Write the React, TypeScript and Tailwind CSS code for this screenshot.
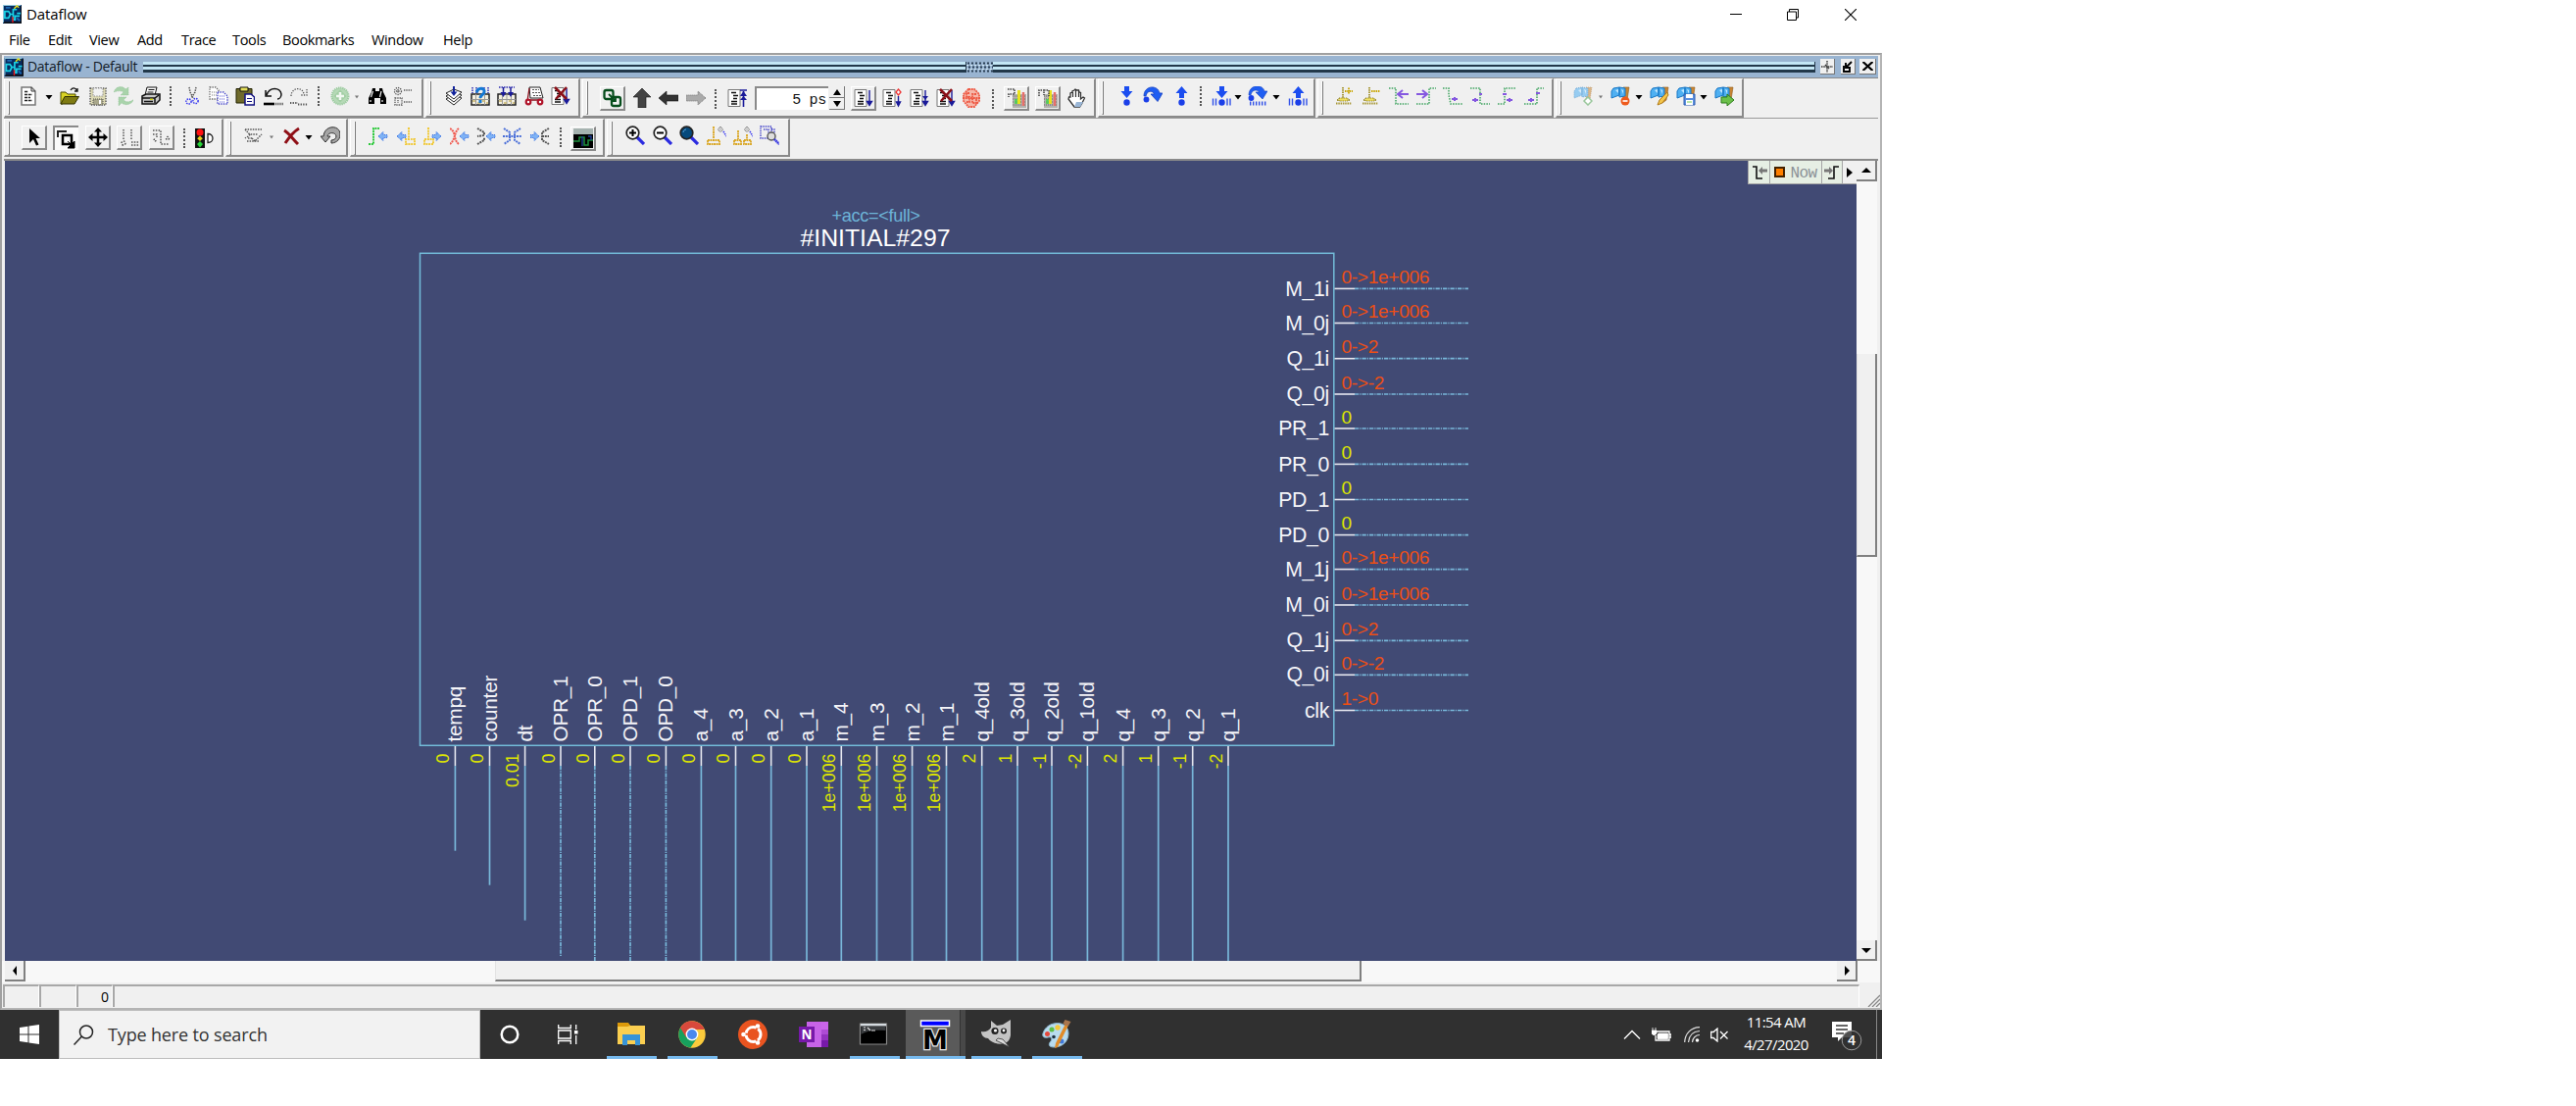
import type { ReactNode } from "react";

const UI = "font-['Open_Sans','Noto_Sans',sans-serif]";

/* ---------- small building blocks ---------- */

function Icon({ gap = "", children }: { gap?: string; children: ReactNode }) {
  return (
    <svg className={`h-5 w-5 shrink-0 ${gap}`} viewBox="0 0 20 20" fill="none">
      {children}
    </svg>
  );
}

function Caret({ gap, dim = false }: { gap: string; dim?: boolean }) {
  return (
    <svg className={`h-5 w-2 shrink-0 ${gap}`} viewBox="0 0 8 20">
      {dim ? <path d="M2 9.5h4L4 12.5z" fill="#777" /> : <path d="M.5 9h7L4 13.5z" fill="#000" />}
    </svg>
  );
}

function Sep({ gap }: { gap: string }) {
  return <div className={`h-5 w-0.5 shrink-0 border-l-2 border-dotted border-[#555] ${gap}`} />;
}

function Btn({ gap, pressed = false, children }: { gap: string; pressed?: boolean; children: ReactNode }) {
  return (
    <div
      className={`flex h-[25px] w-[26px] shrink-0 items-center justify-center ${gap} ${
        pressed
          ? "border-t-2 border-l-2 border-[#8a8a8a] bg-[#fafafa]"
          : "border-t border-l border-t-white border-l-white border-r-2 border-b-2 border-r-[#8a8a8a] border-b-[#8a8a8a] bg-[#f0f0f0]"
      }`}
    >
      {children}
    </div>
  );
}

function Group({ size, top, children }: { size: string; top: string; children: ReactNode }) {
  return (
    <div
      className={`flex shrink-0 items-start border-t border-l border-t-white border-l-white border-r-2 border-b-2 border-r-[#8a8a8a] border-b-[#8a8a8a] ${size}`}
    >
      <div className="mt-0.5 ml-[3px] h-[34px] w-0.5 shrink-0 border-r border-b border-l border-l-white border-r-[#777] border-b-[#777]" />
      <div className={`flex items-start ${top}`}>{children}</div>
    </div>
  );
}

/* ---------- icon drawings ---------- */

const Lines = () => (
  <>
    <path d="M2 1h10l4 4v14H2z" fill="#fff" stroke="#777" strokeWidth="1.5" />
    <path d="M12 1v4h4" stroke="#333" />
    <path d="M5 5.5h4M5 8.5h8M5 11.5h6M5 14.5h8" stroke="#222" strokeWidth="1.5" strokeDasharray="3 .8" />
  </>
);
const RunDoc = () => (
  <>
    <path d="M1 1.500h12v17H1z" fill="#fff" stroke="#777" />
    <path d="M4 4.500h5M6 7.500h5M6 10.500h4M4 13.500h6M4 16h6" stroke="#111" strokeWidth="1.700" />
  </>
);
const NavyDown = ({ x = 16 }: { x?: number }) => (
  <path d={`M${x} 2v14M${x - 2.500} 13.500l2.500 4l2.500-4z`} stroke="#1a1a99" strokeWidth="1.400" fill="#1a1a99" />
);
const AppIcon = () => (
  <>
    <path d="M0 0h20v20H0z" fill="#072a5e" />
    <path d="M0 0h19v1H1v18H0z" fill="#8fc7dd" />
    <path d="M1 19h19V1" stroke="#111" strokeWidth="1.600" />
    <path d="M2 7h4l2 3-2 4H2zM8 10h3V5h4M11 9v7h2v-4h5M15 9h4" stroke="#19d3e6" strokeWidth="1.800" />
    <path d="M10.500 13v6" stroke="#e11" strokeWidth="1.500" />
    <path d="M12 4l3-3 2 2" stroke="#e8e01d" strokeWidth="1.500" />
    <path d="M3 3h5M15 14l3 3" stroke="#1c6ab4" strokeWidth="2" />
  </>
);
const Folder = () => (
  <>
    <path d="M1 6h5l2 2h8v4H7l-4 6H1z" fill="#d9d324" stroke="#4a4a00" />
    <path d="M5 10.500h14.500L15 18H1z" fill="#7f7b12" stroke="#333300" />
    <path d="M11 4c2-3 5-3 7 1m0-3v3h-3" stroke="#111" strokeWidth="1.300" />
  </>
);
const Save = () => (
  <>
    <path d="M2 2h16v17H2z" fill="#dcd9b4" stroke="#555" strokeWidth="1.400" strokeDasharray="1.300 1.300" />
    <path d="M5 2h10v8H5z" fill="#f3f3f3" stroke="#888" strokeDasharray="1.300 1.300" />
    <path d="M5 13h10v6H5z" fill="#a9a78b" stroke="#555" strokeDasharray="1 1" />
    <path d="M11 14h2v4h-2z" fill="#fff" />
  </>
);
const Refresh = () => (
  <g fill="#a9d3ab" stroke="#8fbf93" strokeWidth=".6" strokeDasharray="1 .7">
    <path d="M0 6c2-6 9-7 12-3l3-2v8H7l3-3C7 4 3 5 0 6z" />
    <path d="M21 13c-3 6-9 7-13 4l-3 3v-9h8l-3 3c3 3 7 2 11-1z" />
  </g>
);
const Print = () => (
  <>
    <path d="M6 1h10l-2 8H4z" fill="#fff" stroke="#111" />
    <path d="M7.500 3.500h6M6.500 6h6" stroke="#111" />
    <path d="M1 10l4-2h14v6l-4 4H1z" fill="#c9c9c9" stroke="#111" strokeWidth="1.500" />
    <path d="M1 12h13l4-3M3 15.500h9M14 12v5" stroke="#111" strokeWidth="1.500" />
    <path d="M9 13.300h3" stroke="#d6d61c" strokeWidth="1.500" />
  </>
);
const Cut = () => (
  <>
    <path d="M7 1l1 5 3 6M14 1l-1 5-4 6" stroke="#555" strokeWidth="1.500" strokeDasharray="1.500 1" />
    <g stroke="#3a3af0" strokeWidth="1.500" strokeDasharray="1.500 1">
      <circle cx="6.500" cy="15.500" r="2.600" />
      <circle cx="13.500" cy="15" r="2.600" />
    </g>
  </>
);
const Copy = () => (
  <>
    <path d="M1 1h6l3 3v9H1z" fill="#fff" stroke="#666" strokeDasharray="1.300 1.200" strokeWidth="1.300" />
    <path d="M3 6h5M3 9h5" stroke="#777" strokeDasharray="1 1" />
    <path d="M9 6h6l4 4v8H9z" fill="#fff" stroke="#4040c8" strokeDasharray="1.300 1.200" strokeWidth="1.300" />
    <path d="M11 10h6M11 13h6M11 16h6" stroke="#4d4dd0" strokeDasharray="1 1" />
  </>
);
const Paste = () => (
  <>
    <path d="M1 2.500h16V17H1z" fill="#6f6a2c" stroke="#222200" />
    <path d="M5 1h8v4H5z" fill="#e4df5a" stroke="#111" />
    <path d="M10 8h6l3.500 3v8H10z" fill="#fff" stroke="#101080" strokeWidth="1.500" />
    <path d="M12 12.500h5M12 15.500h5" stroke="#101080" strokeWidth="1.200" />
  </>
);
const Undo = ({ dim = false }: { dim?: boolean }) =>
  dim ? (
    <g stroke="#555" strokeWidth="1.300" strokeDasharray="1.300 1.300">
      <path d="M2 10C2 1 14 0 15 8M18 3v6h-6" />
      <path d="M1 17h8M9 18.500h10" strokeWidth="1.800" />
    </g>
  ) : (
    <>
      <path d="M2 4v6h6M3 9C6 0 17 1 18 8c0 3-2 5-4 5" stroke="#111" strokeWidth="1.500" />
      <path d="M0 18h11" stroke="#000" strokeWidth="2.600" />
      <path d="M12 18h8" stroke="#555" strokeWidth="2.600" strokeDasharray="1.200 1" />
    </>
  );
const AddGreen = () => (
  <>
    <circle cx="10" cy="10" r="8.500" fill="#b5d9b6" stroke="#9ccba0" strokeWidth="2" strokeDasharray="1.300 .8" />
    <path d="M10 3.500l6.500 6.500-6.500 6.500L3.500 10z" fill="#a2cea4" />
    <path d="M10 6v8M6 10h8" stroke="#f1f8f1" strokeWidth="2.500" />
  </>
);
const Binoculars = () => (
  <>
    <path d="M5 2h3v3h4V2h3l1 4 3 6v6h-6v-6H7v6H1v-6l3-6z" fill="#000" />
    <path d="M5.500 5l-2 6M14 5l-1.500 6M3 14v2M15 14v2" stroke="#eee" strokeWidth="1.200" />
  </>
);
const FindBoxes = () => (
  <g stroke="#555" strokeWidth="1.300" strokeDasharray="1.300 1">
    <circle cx="5" cy="5" r="3.500" />
    <path d="M2 12h7v7H2zM11 4h8M11 16h8M5 3v4M3 5h4M5 14v3" />
  </g>
);
const Stack = () => (
  <>
    <path d="M2 13l8-5 8 4-8 7z" fill="#fff" stroke="#222" />
    <path d="M2 10l8-5 8 4-8 7z" fill="#fff" stroke="#222" />
    <path d="M2 7l8-4 8 3-8 7z" fill="#fff" stroke="#222" />
    <path d="M10 0v6" stroke="#11229b" strokeWidth="2" />
    <path d="M6.500 5.500h7L10 10z" fill="#11229b" />
  </>
);
const Grid = () => (
  <>
    <path d="M1 8h18v11H1z" fill="#f3efe0" stroke="#222" strokeWidth="1.500" />
    <path d="M1 13.500h18M5.500 8v11M10 8v11M14.500 8v11" stroke="#999" />
    <path d="M2 15h3M7 17h3M12 15h3M16 17h2" stroke="#c8b56b" strokeWidth="1.500" />
  </>
);
const GridHelp = () => (
  <>
    <path d="M2 1v6M6 1v6M14 1v6M18 1v6" stroke="#2a2ab0" strokeWidth="1.500" strokeDasharray="1.500 1" />
    <Grid />
    <path d="M6.500 6.500C7 1 15 1 14 6c-.5 2.500-4 3-4 6M10 14v3" stroke="#1478d4" strokeWidth="3" />
  </>
);
const GridDown = () => (
  <>
    <path d="M2 1h16" stroke="#2a2ab0" strokeWidth="1.500" strokeDasharray="1.500 1" />
    <Grid />
    <path d="M6.500 1v6M14 1v6" stroke="#1a1a99" strokeWidth="1.500" />
    <path d="M3.500 6h6l-3 5zM11 6h6l-3 5z" fill="#1a1a99" />
  </>
);
const Bike = () => (
  <>
    <path d="M5 1h11l3 11H6z" fill="#fff" stroke="#222" />
    <path d="M8 3.500h7M8 6.500h8M9 9.500h8" stroke="#555" strokeDasharray="2 1" />
    <path d="M5 2L3 15M5 14h11" stroke="#8b0f1c" strokeWidth="1.300" />
    <circle cx="4" cy="16" r="2.300" fill="#fff" stroke="#b0142a" strokeWidth="2.200" />
    <circle cx="16" cy="16" r="2.300" fill="#fff" stroke="#b0142a" strokeWidth="2.200" />
  </>
);
const DocKill = () => (
  <>
    <RunDoc />
    <NavyDown />
    <path d="M4 1l12 12M16 1L5 13" stroke="#8b1018" strokeWidth="2.500" />
  </>
);
const GreenLink = () => (
  <g stroke="#064d1c" strokeWidth="2.300">
    <rect x="1.500" y="2" width="9" height="9" rx="2" />
    <rect x="9" y="9" width="9" height="9" rx="2" />
    <path d="M6 6l7 7M13 9v4H9" strokeWidth="1.800" />
  </g>
);
const Restart = () => (
  <>
    <RunDoc />
    <path d="M13 2h7M16.500 3v16" stroke="#1a1a99" strokeWidth="1.600" />
    <path d="M13 8l3.500-5L20 8zM13 12l3.500-4 3.500 4z" fill="#1a1a99" />
  </>
);
const RunOne = () => (<><RunDoc /><NavyDown /></>);
const RunCont = () => (
  <>
    <RunDoc />
    <path d="M16.500 1l2.500 3-2.500 3L14 4z" fill="#fff" stroke="#e33" strokeWidth="1.300" />
    <path d="M16.500 8v8M14.500 14l2 4 2-4z" stroke="#1a1a99" strokeWidth="1.400" fill="#1a1a99" />
  </>
);
const RunAll = () => (
  <>
    <RunDoc />
    <NavyDown />
    <path d="M13 8h6l-3 4z" fill="#1a1a99" />
  </>
);
const StopSign = () => (
  <g stroke="#ee5a45" strokeWidth="1.800" strokeDasharray="2 .7">
    <path d="M7 1h6l5 5v7l-5 6H7l-5-6V6z" fill="#f6b7aa" />
    <path d="M8 5H5v4h3v5H5M15 6h-4v9h4v-5M1 10h18" />
  </g>
);
const Profile = ({ left = true }: { left?: boolean }) => (
  <>
    <path d="M6 6h14v14H6z" fill="#b3b3ae" />
    <path d="M6 8h14M6 11h14M6 14h14M6 17h14" stroke="#666" strokeDasharray="1 1" />
    <path d="M12.500 2v14" stroke="#e8e21d" strokeWidth="3" />
    <path d="M17 4v14" stroke="#e8706a" strokeWidth="2.500" />
    <path d="M9.500 11v5" stroke="#51d05a" strokeWidth="2.500" />
    <path d={left ? "M1 1h7v5H2v3" : "M1 8V2h5v5M6 2h5v6"} stroke="#444" strokeWidth="1.600" strokeDasharray="1.500 1" />
  </>
);
const Hand = () => (
  <>
    <path d="M4 9V5l2-1V3l2-1 1-1 1.500 1 2 0 .5 2 1.500.5V11l2.500-2 1.500 1-3 6-2 3H8L2 11l.5-2z" fill="#fff" stroke="#333" strokeWidth="1.300" />
    <path d="M6.500 4v5M9.500 2v7M12.500 3v6" stroke="#333" strokeWidth="1.200" />
    <path d="M10 14h7l-3 5H8z" fill="#9ab6d6" />
  </>
);
const StepIn = () => (
  <>
    <path d="M8 0h5v5h3.500L10.500 12 4.500 5H8z" fill="#1b4df0" />
    <circle cx="10.500" cy="16.500" r="3.200" fill="#1b3fe8" />
  </>
);
const StepOut = () => (
  <>
    <path d="M8 12h5V7h3.500L10.500 0 4.500 7H8z" fill="#1b4df0" />
    <circle cx="10.500" cy="16.500" r="3.200" fill="#1b3fe8" />
  </>
);
const StepOver = () => (
  <>
    <path d="M1 10C1-1 15-2 17 7h3L15 15.500 8 8h3.500C10 4 4 4 3 10z" fill="#1f5ef2" stroke="#1640c0" strokeWidth=".8" />
    <circle cx="3.500" cy="13.500" r="2.900" fill="#1b3fe8" />
  </>
);
const Bars = () => <path d="M1.500 12.500v7M4.500 12.500v7M16 12.500v7M19 12.500v7" stroke="#3050e8" strokeWidth="1.400" />;
const OverBars = () => (
  <>
    <path d="M1 9C1-2 15-3 17 5h3L15 13 8 6h3.500C10 3 4 3 3 9z" fill="#1f5ef2" stroke="#1640c0" strokeWidth=".6" />
    <circle cx="3.500" cy="12" r="2.900" fill="#1b3fe8" />
    <path d="M2 17.500h18" stroke="#3050e8" strokeWidth="4" strokeDasharray="1.400 1.600" />
  </>
);
const Cursor = ({ plus = false }: { plus?: boolean }) => (
  <>
    <path d="M8 1v11M2 14h13M1 17.500h16" stroke="#a8983a" strokeWidth="2" strokeDasharray="1.500 .8" />
    <path d="M4 12h9v3H4z" fill="#f0e060" stroke="#8f8226" strokeDasharray="1.300 1" />
    <path d={plus ? "M10 5h8M14 1.500v7" : "M10 5h9"} stroke="#c9a500" strokeWidth="1.800" strokeDasharray="1.500 .8" />
  </>
);
const Edge = ({ d, a, flip = false }: { d: string; a: string; flip?: boolean }) => (
  <>
    <path d={d} stroke="#3ea35f" strokeWidth="1.500" strokeDasharray="1.500 1.200" />
    <g transform={flip ? "matrix(-1 0 0 1 20 0)" : undefined}>
      <path d={a} stroke="#8558e0" strokeWidth="2" />
    </g>
  </>
);
const Bookmark = ({ dim = false, children }: { dim?: boolean; children?: ReactNode }) => (
  <>
    <g strokeDasharray={dim ? "1 1" : undefined} opacity={dim ? 0.55 : 1}>
      <path d="M13 1h6l-2 13-4 3z" fill="#c98532" stroke="#8d5a1c" strokeWidth=".6" />
      <path d="M3 2l6-1v8L1 12V5zM9 1l6 1v8l-6 1z" fill="#4fb0f2" stroke="#1977c4" />
      <path d="M5 4l3-1v4zM11 3l2 1v4z" fill="#c2e6fd" />
    </g>
    {children}
  </>
);
const Arrow = () => <path d="M5 1v15l4-4 3 6.500 2.500-1L11.500 11H16z" fill="#000" />;
const SelectBox = () => (
  <>
    <path d="M1 8V2h9" stroke="#222" strokeWidth="2" />
    <path d="M6 6h9v9H6z" stroke="#000" strokeWidth="2.500" />
    <path d="M11 12l6 6M18 12v7h-7z" stroke="#000" fill="#000" />
  </>
);
const Move = () => (
  <>
    <path d="M10 2v16M2 10h16" stroke="#000" strokeWidth="2.500" />
    <path d="M10 0l4 4.500H6zM10 20l4-4.500H6zM0 10l4.500-4v8zM20 10l-4.500-4v8z" fill="#000" />
  </>
);
const DotsA = () => (
  <g stroke="#555" strokeWidth="1.500" strokeDasharray="1.500 1.300">
    <path d="M4 2v11M12 2v11M12 15h8M12 18h8" />
    <circle cx="4" cy="16" r="2" />
  </g>
);
const DotsB = () => (
  <g stroke="#555" strokeWidth="1.500" strokeDasharray="1.500 1.300">
    <path d="M1 3h8v14h8M1 7h4v4" />
    <circle cx="16" cy="11" r="1.500" />
    <circle cx="3" cy="13" r="1" />
  </g>
);
const Traffic = () => (
  <>
    <path d="M1 0h10v20H1z" fill="#111" />
    <circle cx="6" cy="4" r="3.500" fill="#f11" />
    <path d="M6 7.500l2.800 2.800L6 13l-2.800-2.700z" fill="#e8d31c" />
    <path d="M6 13l3 3-3 3.500L3 16z" fill="#27d63a" />
    <path d="M14 5.500v9c3 0 5-2 5-4.500s-2-4.500-5-4.500z" fill="#fff" stroke="#222" strokeWidth="1.300" />
  </>
);
const DotGate = () => (
  <g stroke="#555" strokeWidth="1.500" strokeDasharray="1.500 1.100">
    <path d="M1 3h17M1 3c2 2 3 4 5 5h8M6 8c-2 3-4 3-5 4M3 15h13M8 12l3 3 7-7M4 12h4" />
  </g>
);
const RedX = () => <path d="M2 4c5 3 8 8 14 14M17 2C12 5 7 11 3 17" stroke="#8f0f16" strokeWidth="3" />;
const Loop = () => (
  <path d="M0 10h3C4-2 20-2 20 8c0 7-6 9-9 9v-3c3 0 5-2 5-4 0-4-8-5-9 0h3l-5 6z" fill="#a5a5a5" stroke="#333" />
);
const BlueArrow = ({ x, left = true }: { x: number; left?: boolean }) => (
  <path
    d={left ? `M${x} 10l5-4.500v3h4v3h-4v3z` : `M${x + 9} 10l-5-4.500v3h-4v3h4v3z`}
    fill="#7fb3f5"
    stroke="#3f77e6"
    strokeWidth="1"
    strokeDasharray="1.300 .8"
  />
);
const Net = ({ c, d, x, left = true }: { c: string; d: string; x?: number; left?: boolean }) => (
  <>
    <path d={d} stroke={c} strokeWidth="2" strokeDasharray="2 .8" />
    {x !== undefined && <BlueArrow x={x} left={left} />}
  </>
);
const Wave = () => (
  <>
    <path d="M0 0h20v20H0z" fill="#000" />
    <path d="M0 0h20v6H0z" fill="#a6b3b0" />
    <path d="M0 13h6V9h5v8h4v-5h5" stroke="#1d8f3c" strokeWidth="1.500" />
    <path d="M9 8v10M15 8h3v4" stroke="#21409a" strokeWidth="1.300" />
  </>
);
const Zoom = ({ kind }: { kind: "in" | "out" | "full" }) => (
  <>
    <path d="M12 12l7 7" stroke="#2b2be0" strokeWidth="3.200" />
    <circle cx="7.500" cy="7.500" r="6.300" fill={kind === "full" ? "#064a7c" : "#fff"} stroke="#222" strokeWidth="1.700" />
    {kind === "in" && <path d="M4 7.500h7M7.500 4v7" stroke="#000" strokeWidth="2" />}
    {kind === "out" && <path d="M4 7.500h7" stroke="#000" strokeWidth="2" />}
    {kind === "full" && <path d="M4 7c0-2 2-3 3-3" stroke="#5fa6d8" />}
  </>
);
const ZoomCursor = ({ two = false }: { two?: boolean }) => (
  <>
    <path d={two ? "M5 5v9M14 9v6M1 15h7v4H1zM11 15h7v4h-7z" : "M7 1v12M1 15h12v4H1z"} stroke="#d9a520" strokeWidth="1.800" strokeDasharray="1.900 .6" />
    <path d="M14 1l3 3-3 3-3-3z" stroke="#777" fill="#ccc" strokeDasharray="1 1" />
    <path d="M17 6l3 5" stroke="#3a3af0" strokeWidth="1.600" strokeDasharray="1.500 1" />
  </>
);
const ZoomArea = () => (
  <>
    <path d="M1 1h11v12H1zM4 4h5v4M12 4h3v4" stroke="#4040c8" strokeWidth="1.400" strokeDasharray="1.400 1" />
    <circle cx="12" cy="11" r="4" fill="#ddd" stroke="#555" strokeWidth="1.400" />
    <path d="M15 14l5 5" stroke="#2b2be0" strokeWidth="2.500" strokeDasharray="1.500 .6" />
  </>
);

/* ---------- window chrome ---------- */

function TitleBar() {
  return (
    <div className="flex h-[29px] items-center bg-white pl-[3px]">
      <svg className="h-[19px] w-[19px]" viewBox="0 0 20 20" fill="none"><AppIcon /></svg>
      <span className="flex-1 pb-px pl-[5px] text-[15px] tracking-[-0.1px] text-black">Dataflow</span>
      <svg className="h-3 w-3" viewBox="0 0 12 12"><path d="M0 5.500h12" stroke="#000" /></svg>
      <svg className="ml-[46px] h-3 w-3" viewBox="0 0 12 12" fill="none">
        <path d="M.5 3h9v8.500h-9zM2.500 3V.5h9V9H9.500" stroke="#000" />
      </svg>
      <svg className="mr-[26px] ml-[47px] h-3 w-3" viewBox="0 0 12 12"><path d="M0 0l12 12M12 0L0 12" stroke="#000" strokeWidth="1.100" /></svg>
    </div>
  );
}

function MenuBar() {
  const cls = "shrink-0 whitespace-nowrap";
  return (
    <div className="flex h-[25px] items-center bg-white pb-0.5 pl-[9px] text-[14.500px] tracking-[-0.35px] text-black">
      <span className={`${cls} w-10`}>File</span>
      <span className={`${cls} w-[42px]`}>Edit</span>
      <span className={`${cls} w-[49px]`}>View</span>
      <span className={`${cls} w-[45px]`}>Add</span>
      <span className={`${cls} w-[52px]`}>Trace</span>
      <span className={`${cls} w-[51px]`}>Tools</span>
      <span className={`${cls} w-[91px]`}>Bookmarks</span>
      <span className={`${cls} w-[73px]`}>Window</span>
      <span className={cls}>Help</span>
    </div>
  );
}

const HeaderRule = () => (
  <div className="h-[11px] flex-1 border-r border-[#24384a]">
    <div className="h-[3px] bg-[#c3e6f5]" />
    <div className="h-[2.500px] bg-[#22384a]" />
    <div className="h-[3px] bg-[#c3e6f5]" />
    <div className="h-[2.500px] bg-[#22384a]" />
  </div>
);

function PaneHeader() {
  const b = "flex h-4 shrink-0 items-center justify-center border-r border-b border-[#777] bg-[#f0f0f0]";
  return (
    <div className="flex h-[22px] items-center bg-[#99b4d1]">
      <svg className="h-[19px] w-5" viewBox="0 0 20 20" fill="none"><AppIcon /></svg>
      <span className="w-[122px] pb-0.5 pl-1 text-[14px] tracking-[-0.3px] whitespace-nowrap text-[#111a26]">Dataflow - Default</span>
      <HeaderRule />
      <svg className="h-[11px] w-[27px]" viewBox="0 0 27 11">
        <path d="M1 1.500h26M2 5.500h26M1 9.500h26" stroke="#2a3f55" strokeWidth="2" strokeDasharray="2 2" />
        <path d="M0 3.500h27M0 7.500h27" stroke="#d5ecf8" strokeDasharray="2 2" />
      </svg>
      <HeaderRule />
      <div className={`${b} ml-[5px] w-[15px]`}>
        <svg className="h-3 w-3" viewBox="0 0 12 12"><path d="M6 0v12M0 6h12M4 4l4 4" stroke="#333" strokeWidth="1.400" strokeDasharray="1.500 .8" /></svg>
      </div>
      <div className={`${b} ml-1.5 w-[15px]`}>
        <svg className="h-3 w-3" viewBox="0 0 12 12" fill="none"><path d="M2 5v6h6V8M10 1L5 6M4 2v5h5" stroke="#000" strokeWidth="1.900" /></svg>
      </div>
      <div className={`${b} mr-0.5 ml-1 w-[17px]`}>
        <svg className="h-[9px] w-[11px]" viewBox="0 0 11 9"><path d="M.5 0l10 9M10.500 0l-10 9" stroke="#000" strokeWidth="2.200" /></svg>
      </div>
    </div>
  );
}

function Toolbars() {
  return (
    <div className="flex h-[82px] flex-col bg-[#f0f0f0]">
      <div className="flex h-10 gap-0.5">
        <Group size="h-10 w-[428px]" top="pt-[7px]">
          <Icon gap="ml-2.5"><Lines /></Icon>
          <Caret gap="ml-1.5" />
          <Icon gap="ml-[7px]"><Folder /></Icon>
          <Icon gap="ml-[9px]"><Save /></Icon>
          <Icon gap="ml-1.5"><Refresh /></Icon>
          <Icon gap="ml-2"><Print /></Icon>
          <Sep gap="ml-[9px]" />
          <Icon gap="ml-[11px]"><Cut /></Icon>
          <Icon gap="ml-[7px]"><Copy /></Icon>
          <Icon gap="ml-[7px]"><Paste /></Icon>
          <Icon gap="ml-[9px]"><Undo /></Icon>
          <Icon gap="ml-1.5"><Undo dim /></Icon>
          <Sep gap="ml-[9px]" />
          <Icon gap="ml-[11px]"><AddGreen /></Icon>
          <Caret gap="ml-[3px]" dim />
          <Icon gap="ml-[7px]"><Binoculars /></Icon>
          <Icon gap="ml-1.5"><FindBoxes /></Icon>
        </Group>
        <Group size="h-10 w-[158px]" top="pt-[7px]">
          <Icon gap="ml-[13px]"><Stack /></Icon>
          <Icon gap="ml-[7px]"><GridHelp /></Icon>
          <Icon gap="ml-[7px]"><GridDown /></Icon>
          <Icon gap="ml-2"><Bike /></Icon>
          <Icon gap="ml-[7px]"><DocKill /></Icon>
        </Group>
        <Group size="h-10 w-[524px]" top="pt-[7px]">
          <Btn gap="ml-3"><Icon><GreenLink /></Icon></Btn>
          <Icon gap="ml-[7px] mt-0.5"><path d="M10 0l9 9h-5v11H6V9H1z" fill="#444" stroke="#111" strokeWidth=".6" /></Icon>
          <Icon gap="ml-[7px] mt-0.5"><path d="M0 10l8-7v4h12v6H8v4z" fill="#333" stroke="#111" strokeWidth=".6" /></Icon>
          <Icon gap="ml-2 mt-0.5"><path d="M20 10l-8-7v4H0v6h12v4z" fill="#aaa" stroke="#777" strokeDasharray="1 1" /></Icon>
          <Sep gap="ml-[9px] mt-[3px]" />
          <Icon gap="ml-[11px] mt-0.5"><Restart /></Icon>
          <div className="ml-2 flex h-6 w-[75px] items-center justify-end border-t-2 border-l-2 border-[#8a8a8a] bg-white pt-1 pr-0.5 font-['Liberation_Mono',monospace] text-[15px] tracking-[-0.3px] whitespace-pre text-[#111]">
            5 ps
          </div>
          <div className="ml-px flex h-6 w-4 flex-col">
            <div className="flex h-3 items-center justify-center border-r border-b border-[#777]">
              <svg className="h-1.5 w-2" viewBox="0 0 8 6"><path d="M4 0l4 6H0z" /></svg>
            </div>
            <div className="flex h-3 items-center justify-center border-r border-b border-[#777]">
              <svg className="h-1.5 w-2" viewBox="0 0 8 6"><path d="M4 6l4-6H0z" /></svg>
            </div>
          </div>
          <Btn gap="ml-1.5"><Icon><RunOne /></Icon></Btn>
          <Icon gap="ml-1.5 mt-0.5"><RunCont /></Icon>
          <Icon gap="ml-2 mt-0.5"><RunAll /></Icon>
          <Icon gap="ml-[7px] mt-0.5"><DocKill /></Icon>
          <Icon gap="ml-1.5 mt-0.5"><StopSign /></Icon>
          <Sep gap="ml-[11px] mt-[3px]" />
          <Btn gap="ml-2.5"><Icon><Profile /></Icon></Btn>
          <Btn gap="ml-1.5"><Icon><Profile left={false} /></Icon></Btn>
          <Icon gap="ml-1.5 mt-0.5"><Hand /></Icon>
        </Group>
        <Group size="h-10 w-[222px]" top="pt-[7px]">
          <Icon gap="ml-[13px]"><StepIn /></Icon>
          <Icon gap="ml-[7px]"><StepOver /></Icon>
          <Icon gap="ml-[9px]"><StepOut /></Icon>
          <Sep gap="ml-[9px]" />
          <Icon gap="ml-2.5"><StepIn /><Bars /></Icon>
          <Caret gap="ml-[3px]" />
          <Icon gap="ml-1.5"><OverBars /></Icon>
          <Caret gap="ml-[5px]" />
          <Icon gap="ml-2"><StepOut /><Bars /></Icon>
        </Group>
        <Group size="h-10 w-[241px]" top="pt-[7px]">
          <Icon gap="ml-3"><Cursor plus /></Icon>
          <Icon gap="ml-[7px]"><Cursor /></Icon>
          <Icon gap="ml-2"><Edge d="M0 2h7v16h13" a="M9 8h11M14 4l-5 4 5 4" /></Icon>
          <Icon gap="ml-2"><Edge d="M0 18h13V2h7" a="M9 8h11M14 4l-5 4 5 4" flip /></Icon>
          <Icon gap="ml-[7px]"><Edge d="M0 2h6v7l2 9h12" a="M9 13h6M12 11v4" /></Icon>
          <Icon gap="ml-2"><Edge d="M0 2h10v16h10" a="M2 14h6M5 12v4M9 8h3" /></Icon>
          <Icon gap="ml-2"><Edge d="M0 18h7V2h12" a="M9 14h6M12 12v4M5 8h4" /></Icon>
          <Icon gap="ml-[7px]"><Edge d="M0 18h13V2h7" a="M4 14h6M7 12v4M12 7h4" /></Icon>
        </Group>
        <Group size="h-10 w-[192px]" top="pt-[7px]">
          <Icon gap="ml-3"><Bookmark dim><path d="M15 11l4 4-4 4-4-4z" fill="#fff" stroke="#9ac79c" strokeWidth="1.500" /></Bookmark></Icon>
          <Caret gap="ml-1" dim />
          <Icon gap="ml-1.5"><Bookmark><circle cx="15" cy="15" r="4.500" fill="#ee5a1c" /><path d="M12.500 15h5" stroke="#fff" strokeWidth="1.600" /></Bookmark></Icon>
          <Caret gap="ml-[5px]" />
          <Icon gap="ml-[7px]"><Bookmark><path d="M18 6l-8 8-2 5 5-2 6-8z" fill="#f3c54a" stroke="#b07a18" /></Bookmark></Icon>
          <Icon gap="ml-[7px]"><Bookmark><path d="M8 8h11v11H8z" fill="#5a8fe0" stroke="#2f5fb0" /><path d="M10 8h7v4h-7zM10 14h7v5h-7z" fill="#fff" /><path d="M11 16h5" stroke="#7c5" /></Bookmark></Icon>
          <Caret gap="ml-1" />
          <Icon gap="ml-[7px]"><Bookmark><path d="M7 11h6V8l7 6-7 6v-3H7z" fill="#6cc04a" stroke="#2f7d1e" /></Bookmark></Icon>
        </Group>
      </div>
      <div className="flex h-10 gap-0.5 border-t border-[#999]">
        <Group size="h-[39px] w-[224px]" top="pt-1.5">
          <Btn gap="ml-3"><Icon><Arrow /></Icon></Btn>
          <Btn gap="ml-1.5" pressed><Icon><SelectBox /></Icon></Btn>
          <Btn gap="ml-[7px]"><Icon><Move /></Icon></Btn>
          <Btn gap="ml-1.5"><Icon><DotsA /></Icon></Btn>
          <Btn gap="ml-[7px]"><Icon><DotsB /></Icon></Btn>
          <Sep gap="ml-[9px] mt-[3px]" />
          <Icon gap="ml-[9px] mt-[3px]"><Traffic /></Icon>
        </Group>
        <Group size="h-[39px] w-[125px]" top="pt-[7px]">
          <Icon gap="ml-[13px]"><DotGate /></Icon>
          <Caret gap="ml-1" dim />
          <Icon gap="ml-[7px]"><RedX /></Icon>
          <Caret gap="ml-[3px]" />
          <Icon gap="ml-2"><Loop /></Icon>
        </Group>
        <Group size="h-[39px] w-[260px]" top="pt-[7px]">
          <Icon gap="ml-[13px]"><Net c="#2bc93a" d="M0 18h5V2h6" x={10} /></Icon>
          <Icon gap="ml-[9px]"><Net c="#f0c93a" d="M12 1v12h-3v5h9v-5h-4" x={0} /></Icon>
          <Icon gap="ml-1.5"><Net c="#f0c93a" d="M6 1v12H2v5h9v-5H7" x={10} left={false} /></Icon>
          <Icon gap="ml-2"><Net c="#f05a50" d="M0 2c7 4 3 11 9 16M9 2C4 6 6 13 0 18" x={10} /></Icon>
          <Icon gap="ml-[7px]"><Net c="#555" d="M1 2l7 4v3l-7 1M1 18l7-4v-3" x={10} /></Icon>
          <Icon gap="ml-[7px]"><Net c="#4a6fd8" d="M1 2l6 4v8l-6 4M18 2l-6 4v8l6 4M0 10h19" /></Icon>
          <Icon gap="ml-2"><Net c="#555" d="M19 2l-7 4v8l7 4M12 10h7" x={0} left={false} /></Icon>
          <Sep gap="ml-2.5 mt-px" />
          <Btn gap="ml-[9px]"><Icon><Wave /></Icon></Btn>
        </Group>
        <Group size="h-[39px] w-[187px]" top="pt-1.5">
          <Icon gap="ml-[13px]"><Zoom kind="in" /></Icon>
          <Icon gap="ml-2"><Zoom kind="out" /></Icon>
          <Icon gap="ml-[7px]"><Zoom kind="full" /></Icon>
          <Icon gap="ml-2"><ZoomCursor /></Icon>
          <Icon gap="ml-[7px]"><ZoomCursor two /></Icon>
          <Icon gap="ml-[7px]"><ZoomArea /></Icon>
        </Group>
      </div>
    </div>
  );
}

/* ---------- schematic ---------- */

const OUT = "#ee4f14";
const VAL = "#dfe600";
const outputs: [string, string, number][] = [
  ["M_1i", "0->1e+006", 294.4],
  ["M_0j", "0->1e+006", 329.5],
  ["Q_1i", "0->2", 365.7],
  ["Q_0j", "0->-2", 402],
  ["PR_1", "0", 437],
  ["PR_0", "0", 473.4],
  ["PD_1", "0", 509.5],
  ["PD_0", "0", 545.6],
  ["M_1j", "0->1e+006", 580.6],
  ["M_0i", "0->1e+006", 617],
  ["Q_1j", "0->2", 653.3],
  ["Q_0i", "0->-2", 688.3],
  ["clk", "1->0", 724.5],
];
const inputs: [string, string, number, number?][] = [
  ["tempq", "0", 464.4, 867.7],
  ["counter", "0", 499.5, 902.7],
  ["dt", "0.01", 535.6, 938.7],
  ["OPR_1", "0", 572, 975],
  ["OPR_0", "0", 606.8],
  ["OPD_1", "0", 643],
  ["OPD_0", "0", 679.4],
  ["a_4", "0", 715.4],
  ["a_3", "0", 750.5],
  ["a_2", "0", 786.7],
  ["a_1", "0", 823],
  ["m_4", "1e+006", 858.3],
  ["m_3", "1e+006", 894.5],
  ["m_2", "1e+006", 930.6],
  ["m_1", "1e+006", 965.5],
  ["q_4old", "2", 1001.7],
  ["q_3old", "1", 1038],
  ["q_2old", "-1", 1073],
  ["q_1old", "-2", 1109.4],
  ["q_4", "2", 1145.6],
  ["q_3", "1", 1181.7],
  ["q_2", "-1", 1216.7],
  ["q_1", "-2", 1253],
];
const DASH = "4.3 1 1.2 1";

function Schematic() {
  return (
    <svg
      className="h-[816px] w-[1889px] bg-[#414a74] font-['Liberation_Sans',Arial,sans-serif]"
      viewBox="5 164 1889 816"
    >
      <rect x="428.5" y="258.300" width="932.300" height="502" fill="none" stroke="#73bcd9" strokeWidth="1.500" />
      <text x="893.500" y="226" fontSize="18.200" letterSpacing="-0.350" fill="#6db4d8" textAnchor="middle">+acc=&lt;full&gt;</text>
      <text x="893" y="251.300" fontSize="24.800" fill="#fff" textAnchor="middle">#INITIAL#297</text>
      {outputs.map(([name, value, y]) => (
        <g key={name}>
          <text x="1356" y={y + 7.1} fontSize="21.300" letterSpacing="-0.350" fill="#f4f4f8" textAnchor="end">{name}</text>
          <path d={`M1361.500 ${y}H1382`} stroke="#e6e8f0" strokeWidth="1.600" />
          <path d={`M1382 ${y}H1498`} stroke="#78b7d9" strokeWidth="1.700" strokeDasharray={DASH} />
          <text x="1368.500" y={y - 5.3} fontSize="19.200" letterSpacing="-0.350" fill={value === "0" ? VAL : OUT}>{value}</text>
        </g>
      ))}
      {inputs.map(([name, value, x, end]) => (
        <g key={name}>
          <text transform={`translate(${x + 7} 756.500) rotate(-90)`} fontSize="20.800" letterSpacing="-0.250" fill="#f4f4f8">{name}</text>
          <path d={`M${x} 761V781`} stroke="#e6e8f0" strokeWidth="1.600" />
          <path
            d={`M${x} 781V${end ?? 980}`}
            stroke="#78b7d9"
            strokeWidth="1.700"
            strokeDasharray={name.startsWith("OP") ? DASH : undefined}
          />
          <text transform={`translate(${x - 6.3} 768.500) rotate(-90)`} fontSize="17.800" fill={VAL} textAnchor="end">{value}</text>
        </g>
      ))}
    </svg>
  );
}

function ScrollButton({ d, size = "h-[21px] w-[21px]" }: { d: string; size?: string }) {
  return (
    <div className={`flex shrink-0 items-center justify-center border-r-2 border-b-2 border-[#808080] bg-[#f0f0f0] ${size}`}>
      <svg className="h-2.5 w-2.5" viewBox="0 0 10 10"><path d={d} /></svg>
    </div>
  );
}

function NowBar() {
  const cell = "flex items-center justify-center border-l border-[#a5a5a5]";
  return (
    <div className="absolute top-0 right-0 flex h-6 border-b border-[#a5a5a5] bg-[#e6efe4]">
      <div className={`${cell} w-[22px]`}>
        <svg className="h-4 w-4" viewBox="0 0 16 16" fill="none">
          <path d="M1 2h4v12h6" stroke="#111" strokeWidth="1.600" />
          <path d="M7 6l4-4v2.500h5v3h-5V10z" fill="#777" />
        </svg>
      </div>
      <div className={`${cell} w-[53px] gap-[5px]`}>
        <div className="h-[11px] w-[11px] border-2 border-[#442200] bg-[#ff8000]" />
        <span className="pt-0.5 font-['Liberation_Mono',monospace] text-[16px] tracking-[-0.6px] text-[#8a9096]">Now</span>
      </div>
      <div className={`${cell} w-[21px]`}>
        <svg className="h-4 w-4" viewBox="0 0 16 16" fill="none">
          <path d="M4 14h6V2h5" stroke="#111" strokeWidth="1.600" />
          <path d="M9 6L5 2v2.500H0v3h5V10z" fill="#777" />
        </svg>
      </div>
      <div className={`${cell} w-[15px] bg-[#f0f0f0]`}>
        <svg className="h-2.5 w-1.5" viewBox="0 0 6 10"><path d="M0 0l6 5-6 5z" /></svg>
      </div>
    </div>
  );
}

function StatusBar() {
  const cell = "border-t-2 border-l-2 border-r border-t-[#a8a8a8] border-l-[#a8a8a8] border-r-white";
  return (
    <div className="flex h-[27px] bg-[#f0f0f0] pt-0.5 pl-px">
      <div className={`${cell} h-[23px] w-[37px]`} />
      <div className={`${cell} h-[23px] w-[38px]`} />
      <div className={`${cell} flex h-[23px] w-[37px] items-center justify-end pr-[3px] text-[14px] text-black`}>0</div>
      <div className={`${cell} h-[23px] flex-1`} />
      <svg className="ml-2 h-[23px] w-[13px] pt-2.5" viewBox="0 0 13 13">
        <path d="M1 13L13 1M5 13l8-8M9 13l4-4" stroke="#888" strokeWidth="1.300" />
      </svg>
    </div>
  );
}

/* ---------- taskbar ---------- */

function Task({ on = false, gap, children }: { on?: boolean; gap: string; children: ReactNode }) {
  return (
    <div className={`flex h-[50px] w-[51px] shrink-0 flex-col items-start pl-[9px] ${on ? "border-b-[3px] border-[#76b9ed]" : ""} ${gap}`}>
      <svg className="mt-[9px] h-8 w-8 shrink-0" viewBox="0 0 32 32" fill="none">{children}</svg>
    </div>
  );
}

function Taskbar() {
  return (
    <div className="flex h-[50px] items-center bg-[#303030] text-white">
      <div className="flex w-[60px] shrink-0 justify-center">
        <svg className="h-5 w-5" viewBox="0 0 20 20"><path d="M0 3l8.500-1.200v7.700H0zM9.500 1.600L20 0v9.500H9.500zM0 10.500h8.500v7.700L0 17zM9.500 10.500H20V20L9.500 18.400z" fill="#fff" /></svg>
      </div>
      <div className="flex h-[50px] w-[430px] shrink-0 items-center border border-[#bdbdbd] bg-[#f2f2f2] pl-3.5">
        <svg className="h-[21px] w-[21px]" viewBox="0 0 21 21" fill="none">
          <circle cx="13" cy="7.500" r="6.500" stroke="#222" strokeWidth="1.500" />
          <path d="M8.500 12L.5 20.500" stroke="#222" strokeWidth="1.500" />
        </svg>
        <span className="pl-3.5 text-[18px] tracking-[-0.15px] text-[#333]">Type here to search</span>
      </div>
      <svg className="ml-5 h-5 w-5 shrink-0" viewBox="0 0 20 20" fill="none"><circle cx="10" cy="10" r="8.300" stroke="#fff" strokeWidth="2.500" /></svg>
      <svg className="ml-[39px] h-5 w-[21px] shrink-0" viewBox="0 0 21 20" fill="none">
        <path d="M.7 0v3.500h12.600V0M.7 20v-3.500h12.600V20M.7 6h12.600v8H.7zM18.700 0v5M18.700 11v9" stroke="#fff" strokeWidth="1.300" />
        <path d="M17 6h3.500v3.500H17z" fill="#fff" />
      </svg>
      <Task on gap="ml-[29px]">
        <path d="M2 5h11l2 2h15v19H2z" fill="#fbcf50" />
        <path d="M2 4h11l2 3-3 1H2z" fill="#dd9a0a" />
        <path d="M7 27V16h18v11h-5v-5h-8v5z" fill="#3794d8" />
      </Task>
      <Task on gap="ml-[11px]">
        <circle cx="16" cy="16" r="13.700" fill="#fbcb3c" />
        <path d="M16 16L4.100 9.200A13.700 13.700 0 0 0 14.500 29.600l7-10.600z" fill="#17a05d" />
        <path d="M4.100 9.200a13.700 13.700 0 0 1 24.600 1.800H16L10 19z" fill="#d8493c" />
        <circle cx="16" cy="16" r="6.400" fill="#fff" />
        <circle cx="16" cy="16" r="5" fill="#4a88ee" />
      </Task>
      <Task gap="ml-[11px]">
        <circle cx="16" cy="16" r="15" fill="#e95420" />
        <circle cx="16.500" cy="16" r="7.500" stroke="#fff" strokeWidth="3" strokeDasharray="13.700 2" strokeDashoffset="6.800" />
        <circle cx="6.500" cy="16" r="2.300" fill="#fff" />
        <circle cx="21" cy="7.500" r="2.300" fill="#fff" />
        <circle cx="21" cy="24.500" r="2.300" fill="#fff" />
      </Task>
      <Task gap="ml-[11px]">
        <path d="M9 3h22v26H9z" fill="#c763e8" />
        <path d="M24 3h7v8h-7z" fill="#ca64ea" />
        <path d="M24 11h7v5h-7z" fill="#ae4bd5" />
        <path d="M24 16h7v6h-7z" fill="#9332bf" />
        <path d="M24 22h7v7h-7z" fill="#7719aa" />
        <path d="M1 8h16v16H1z" fill="#7719aa" />
        <text x="9" y="21" fontSize="13.500" fontWeight="700" fill="#fff" textAnchor="middle">N</text>
      </Task>
      <Task on gap="ml-[11px]">
        <path d="M1.500 5h27v21h-27z" fill="#000" stroke="#888" strokeWidth="1.200" />
        <path d="M2 5h26v2.500H2z" fill="#d5dbe0" />
        <path d="M2.500 8h25v4c-10-1-20 0-25 4z" fill="#3a3d40" />
        <path d="M5 9h2M5 11.500h2M9 9l3 3M13 12h4" stroke="#ddd" strokeWidth="1.200" />
      </Task>
      <div className="ml-1.5 flex h-[50px] w-[61px] shrink-0 border-b-[3px] border-[#76b9ed] bg-[#484848]">
        <div className="flex w-14 justify-center border-r border-[#333] bg-[#5a5a5a] pl-1">
          <svg className="mt-[9px] h-[38px] w-10 shrink-0" viewBox="0 0 40 38">
            <path d="M5.500 2h29v5.500h-29z" fill="#00f" stroke="#fff" strokeWidth="1.500" />
            <text x="20" y="30.500" fontSize="26" fontWeight="700" fill="#000" stroke="#e8e8e8" strokeWidth="2.500" paintOrder="stroke" textAnchor="middle" className="font-['DejaVu_Sans',sans-serif]">M</text>
          </svg>
        </div>
      </div>
      <Task on gap="ml-1.5">
        <path d="M11 9V2l6 5 6-1 8-5v16c-1 5-3 7-6 8-8 2-14-1-17-5-4 0-7-3-7-7 4 1 7 0 10-4z" fill="#c4c4c4" />
        <circle cx="15" cy="12.500" r="3.600" fill="#222" /><circle cx="24" cy="12.500" r="3" fill="#222" />
        <circle cx="15.500" cy="12" r="1.600" fill="#fff" /><circle cx="24" cy="12" r="1.400" fill="#fff" />
        <path d="M18 20l5 1 7 8-8-4-6-3z" fill="#ddd" stroke="#333" strokeWidth=".8" />
      </Task>
      <Task on gap="ml-[11px]">
        <path d="M13 5c9-2 15 3 15 10 0 8-6 14-15 14-5 0-6-3-3-6 2-3 0-5-3-4-4 1-6-1-5-4 1-4 5-9 11-10z" fill="#b9dcef" stroke="#8ab4cc" />
        <circle cx="6.500" cy="15.500" r="2.500" fill="#e5483a" /><circle cx="11" cy="11" r="2.500" fill="#5cbf45" />
        <circle cx="17" cy="9" r="2.700" fill="#f3c73a" /><circle cx="21" cy="23" r="2.500" fill="#3f79dc" />
        <circle cx="13" cy="18.500" r="1.800" fill="#1f3040" />
        <path d="M25 5l3 1.500L17 29l-3 1 1-5z" fill="#e08c2a" />
        <path d="M22.500 5l2-4 6 2-3 5z" fill="#a9764e" />
      </Task>
      <div className="flex-1" />
      <svg className="h-2.5 w-[18px] shrink-0" viewBox="0 0 18 10" fill="none"><path d="M1 9.500l8-8 8 8" stroke="#fff" strokeWidth="1.400" /></svg>
      <svg className="ml-[11px] h-[15px] w-5 shrink-0" viewBox="0 0 20 15" fill="none">
        <path d="M5 4h13v9H4V8M18 7h2v3h-2" stroke="#fff" strokeWidth="1.300" />
        <path d="M7 6h9.500v5.500H6V7zM0 3h5v3L3.500 7.500h-2L0 6zM1 0v3M4 0v3" stroke="#fff" fill="#fff" strokeWidth=".8" />
      </svg>
      <svg className="ml-[13px] h-4 w-4 shrink-0" viewBox="0 0 16 16" fill="none">
        <path d="M.7 16C1 7 7 1 16 .7M4.500 16C5 9 9 5 16 4.500M8.500 16c0-4 3.500-7.500 7.500-7.500" stroke="#ddd" strokeWidth="1.200" />
        <circle cx="13.500" cy="14" r="1.800" fill="#fff" />
      </svg>
      <svg className="ml-[11px] h-[15px] w-[18px] shrink-0" viewBox="0 0 18 15" fill="none">
        <path d="M.6 4.500h2.500L7 1v13L3 10.500H.6zM10 4l7.500 7.500M17.500 4L10 11.500" stroke="#fff" strokeWidth="1.300" />
      </svg>
      <div className="ml-2.5 flex w-[78px] shrink-0 flex-col items-center pb-0.5 text-[15px] leading-[23px] tracking-[-0.6px] whitespace-nowrap">
        <span>11:54 AM</span>
        <span>4/27/2020</span>
      </div>
      <svg className="ml-[17px] h-[34px] w-[34px] shrink-0" viewBox="0 0 34 34">
        <path d="M1 4h20v16H11l-4 4v-4H1z" fill="#fff" />
        <path d="M5 8h12M5 12h12M5 16h8" stroke="#333" strokeWidth="1.300" />
        <circle cx="21" cy="23" r="9.800" fill="#303030" fillOpacity=".85" stroke="#999" />
        <text x="21" y="28" fontSize="14" fontWeight="600" fill="#fff" textAnchor="middle">4</text>
      </svg>
      <div className="ml-3 h-[50px] w-1.5 shrink-0 border-l border-[#888]" />
    </div>
  );
}

export default function App() {
  return (
    <div className={`h-[1128px] w-[2628px] overflow-hidden bg-white ${UI}`}>
      <div className="flex h-[1080px] w-[1920px] flex-col">
        <TitleBar />
        <MenuBar />
        <div className="flex h-[976px] flex-col border-t-2 border-r-2 border-b-2 border-l-2 border-t-[#a0a0a0] border-r-[#b4b4b4] border-b-[#b4b4b4] border-l-[#a0a0a0] bg-[#f0f0f0]">
          <div className="pt-px pr-0.5 pl-0.5">
            <PaneHeader />
            <div className="h-px bg-[#8a8a8a]" />
            <Toolbars />
            <div className="h-0.5 bg-[#8a8a8a]" />
          </div>
          <div className="flex h-[816px] pl-[3px]">
            <div className="relative h-[816px] w-[1889px] shrink-0">
              <Schematic />
              <NowBar />
            </div>
            <div className="flex w-[21px] flex-col bg-[#f8f8f8]">
              <ScrollButton d="M5 2l5 5H0z" />
              <div className="h-[176px]" />
              <div className="h-[207px] border-r-2 border-b-2 border-l border-[#808080] border-l-[#e3e3e3] bg-[#f0f0f0]" />
              <div className="flex-1" />
              <ScrollButton d="M5 8l5-5H0z" />
            </div>
          </div>
          <div className="flex h-[22px] bg-[#f8f8f8] pr-[23px] pl-[3px]">
            <ScrollButton d="M3 5l4-5v10z" />
            <div className="w-[479px]" />
            <div className="h-[21px] w-[884px] border-r-2 border-b-2 border-l border-[#808080] border-l-[#e3e3e3] bg-[#f0f0f0]" />
            <div className="flex-1" />
            <ScrollButton d="M8 5L3 0v10z" />
          </div>
          <StatusBar />
        </div>
        <Taskbar />
      </div>
    </div>
  );
}
